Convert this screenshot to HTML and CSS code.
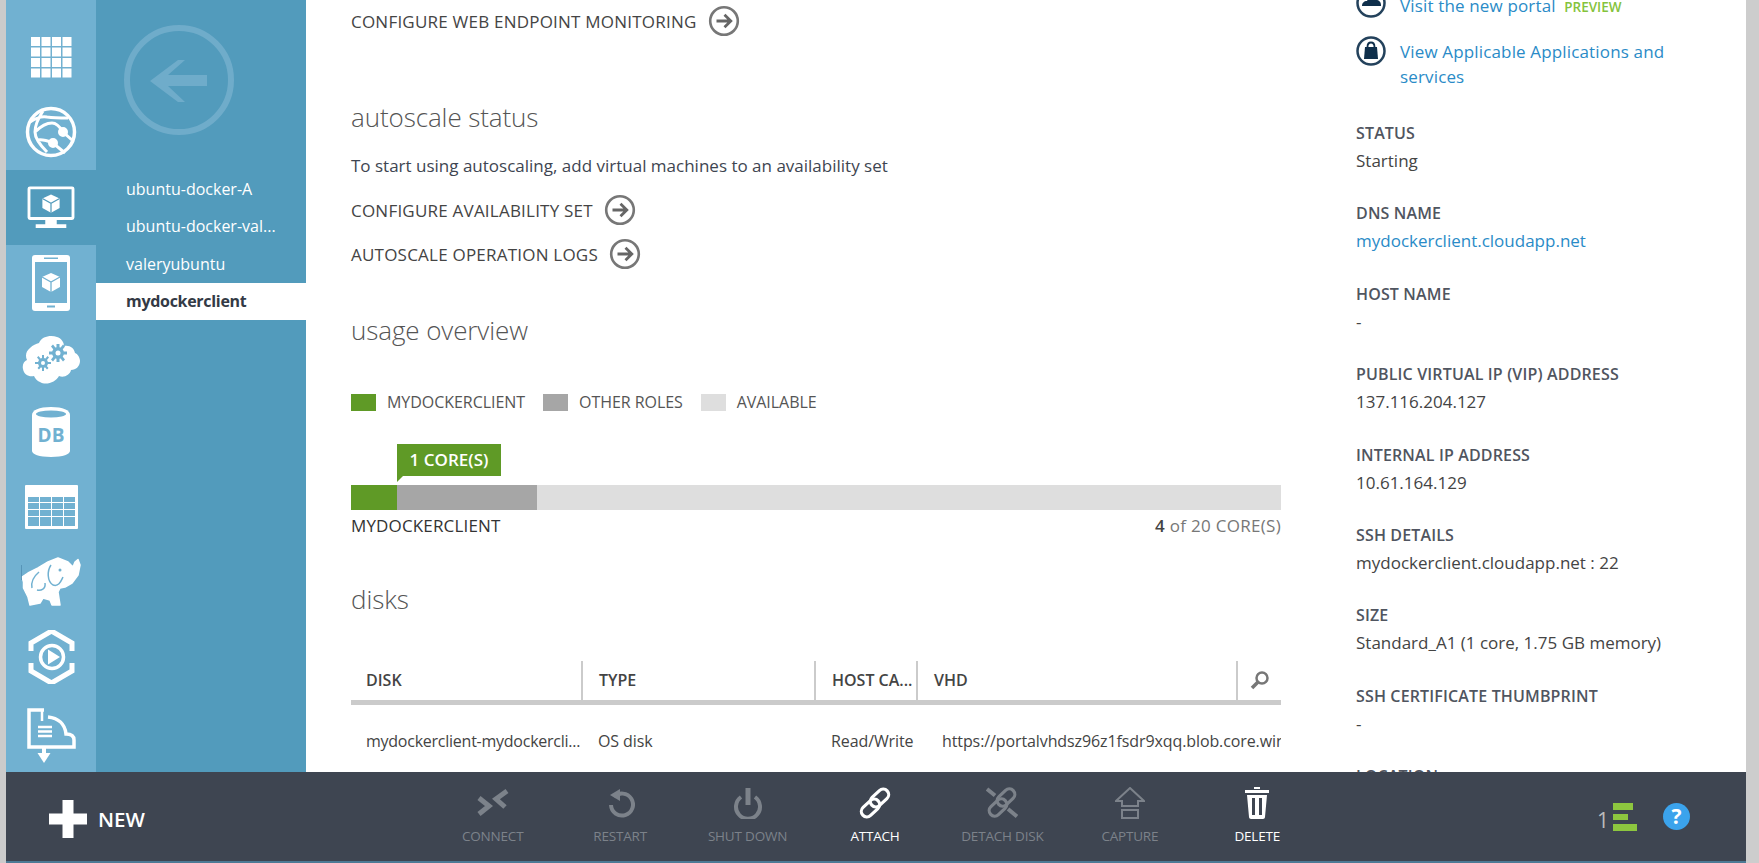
FILE: index.html
```html
<!DOCTYPE html>
<html lang="en">
<head>
  <meta charset="UTF-8">
  <title>Virtual machines - mydockerclient</title>
  <link rel="stylesheet" href="styles.css">
</head>
<body>
  <svg class="defs" width="0" height="0">
    <symbol id="go" viewBox="0 0 32 32">
      <circle cx="16" cy="16" r="13.8" fill="none" stroke="#777" stroke-width="2.6"/>
      <path d="M8.5 16H22M16.5 9.8 22.8 16l-6.3 6.2" fill="none" stroke="#666" stroke-width="2.8"/>
    </symbol>
  </svg>

  <div class="edge"></div>
  <div class="portal">
    <div class="workspace">
      <nav class="rail">
        <a class="rail-item r-all">
          <svg width="41" height="41" viewBox="0 0 41 41" fill="#fff"><path d="M0 0h9v9H0zM10.500 0h9v9h-9zM21 0h9v9h-9zM31.500 0h9v9h-9zM0 10.500h9v9H0zM10.500 10.500h9v9h-9zM21 10.500h9v9h-9zM31.500 10.500h9v9h-9zM0 21h9v9H0zM10.500 21h9v9h-9zM21 21h9v9h-9zM31.500 21h9v9h-9zM0 31.500h9v9H0zM10.500 31.500h9v9h-9zM21 31.500h9v9h-9zM31.500 31.500h9v9h-9z"/></svg>
        </a>
        <a class="rail-item r-web">
          <svg width="52" height="52" viewBox="0 0 52 52" fill="none" stroke="#fff" stroke-width="3"><circle cx="26" cy="26" r="23.500" stroke-width="3.500"/><path d="M5 16c6-4 12-6 17-5 7 1 14 1 21 1M18 5c-4 6-8 14-8 21 0 7 6 14 12 20M10 26c5-5 11-9 17-9 5 0 8 4 11 9l9 8M13 34c5-1 10 1 15 3l12 10"/><circle cx="38" cy="26" r="3.500" fill="#fff"/><circle cx="28" cy="37" r="3.500" fill="#fff"/></svg>
        </a>
        <a class="rail-item rail-active">
          <svg width="48" height="44" viewBox="0 0 50 46"><rect x="2" y="2" width="46" height="32" rx="1" fill="none" stroke="#fff" stroke-width="3"/><path d="M19 34h12v6H19zM9 40h32v4H9z" fill="#fff"/><path d="M25 9l9 4v10l-9 5-9-5V13z" fill="#fff"/><path d="M16 13l9 5 9-5M25 18v10" stroke="#529bbc" stroke-width="1.300" fill="none"/></svg>
        </a>
        <a class="rail-item r-mobile">
          <svg width="38" height="56" viewBox="0 0 38 56"><rect width="38" height="56" rx="3" fill="#fff"/><rect x="3" y="7" width="32" height="41" fill="#71b1d1"/><path d="M12 2.500h14v1.500H12zM15 50.500h8v2h-8z" fill="#71b1d1"/><path d="M19 18l9 4v10l-9 5-9-5V22z" fill="#fff"/><path d="M10 22l9 5 9-5M19 27v10" stroke="#71b1d1" stroke-width="1.300" fill="none"/></svg>
        </a>
        <a class="rail-item r-cloud">
          <svg width="58" height="50" viewBox="0 0 58 50"><path d="M17 8c3-7 12-8 18-6 4 1 7 5 7 9 6-1 10 2 11 7 3 1 5 5 5 8 0 5-4 9-9 9-1 5-7 8-12 6-3 6-13 10-19 6-3-1-5-4-6-6-5 1-10-1-11-7-1-4 1-8 4-9-2-4-1-9 3-12 3-3 6-4 9-5z" fill="#fff"/><g fill="#71b1d1"><circle cx="36" cy="18" r="6"/><path d="M34.500 9h3v18h-3zM27 16.500h18v3H27zM29 11.500l2-2 12 15-2 2zM41 9.500l2 2-12 15-2-2z"/><circle cx="21" cy="28" r="5"/><path d="M20 20h2v16h-2zM13 27h16v2H13zM15 22.500l1.500-1.500 10 12-1.500 1.500zM25.500 21l1.500 1.500-10 12-1.500-1.500z"/></g><circle cx="36" cy="18" r="2.500" fill="#fff"/><circle cx="21" cy="28" r="2" fill="#fff"/></svg>
        </a>
        <a class="rail-item r-db">
          <svg width="40" height="50" viewBox="0 0 40 50"><path d="M1 8C1 3 8 0 20 0s19 3 19 8v36c0 3-7 6-19 6S1 47 1 44z" fill="#fff"/><ellipse cx="20" cy="7" rx="15" ry="3.500" fill="#71b1d1"/><text class="db-text" x="20" y="35" text-anchor="middle">DB</text></svg>
        </a>
        <a class="rail-item r-table">
          <svg width="53" height="44" viewBox="0 0 53 44"><rect width="53" height="44" rx="1" fill="#fff"/><path d="M3 12h11v5H3zM15 12h11v5H15zM27 12h11v5H27zM39 12h11v5H39zM3 18h11v6H3zM15 18h11v6H15zM27 18h11v6H27zM39 18h11v6H39zM3 25h11v6H3zM15 25h11v6H15zM27 25h11v6H27zM39 25h11v6H39zM3 32h11v9H3zM15 32h11v9H15zM27 32h11v9H27zM39 32h11v9H39z" fill="#71b1d1"/></svg>
        </a>
        <a class="rail-item r-hadoop">
          <svg width="60" height="50" viewBox="0 0 60 50"><path d="M1 20 7 16 17 11 27 5 37 1 47 5 52 10 54 5 57 2.500 59 8 57 18 51 26 44 30 39 31 37 35 39 48H31L29 43 22 41 19 46 9 48 7 40 2.500 31 2.500 25z" fill="#fff" stroke="#fff" stroke-width="1.500" stroke-linejoin="round"/><path d="M18 15C12 20 10 26 11 31M24 26C25 32 20 34 16 33M30 8C26 14 26 24 32 28 38 30 40 24 42 20" fill="none" stroke="#71b1d1" stroke-width="1.500"/><circle cx="39" cy="13" r="1.500" fill="#71b1d1"/><path d="M.5 8v15" stroke="#4f8db0" stroke-width=".8"/></svg>
        </a>
        <a class="rail-item r-media">
          <svg width="47" height="54" viewBox="0 0 47 54"><path d="M3 21v-8L23.500 1 44 13v8M3 33v8l20.500 12L44 41v-8" fill="none" stroke="#fff" stroke-width="5"/><circle cx="24" cy="27" r="11.500" fill="none" stroke="#fff" stroke-width="3.500"/><path d="M20 19.500 32 27l-12 7.500z" fill="#fff"/></svg>
        </a>
        <a class="rail-item r-import">
          <svg width="49" height="55" viewBox="0 0 49 55" fill="none" stroke="#fff"><path d="M17 2H2v37h45v-7c0-4-3-6-8-6-1-10-8-16-18-17" stroke-width="3.500"/><path d="M15 2v11M11 19h14M11 23.500h14M11 28h14" stroke-width="2.500"/><path d="M17 39v8" stroke-width="4"/><path d="M10.500 45h13L17 55z" fill="#fff" stroke="none"/></svg>
        </a>
      </nav>

      <aside class="panel">
        <svg class="back" width="110" height="110" viewBox="0 0 110 110"><circle cx="55" cy="55" r="52" fill="none" stroke="#6facca" stroke-width="6"/><path d="M26 56 54 35H61L44 50H83V61H44L61 77H54z" fill="#6facca"/></svg>
        <ul class="vm-list">
          <li>ubuntu-docker-A</li>
          <li>ubuntu-docker-val...</li>
          <li>valeryubuntu</li>
          <li class="vm-current">mydockerclient</li>
        </ul>
      </aside>

      <main class="content">
        <div class="dashboard">
          <a class="go-link">CONFIGURE WEB ENDPOINT MONITORING <svg width="32" height="32"><use href="#go"/></svg></a>

          <h2 class="h-first">autoscale status</h2>
          <p class="note">To start using autoscaling, add virtual machines to an availability set</p>
          <a class="go-link go-second">CONFIGURE AVAILABILITY SET <svg width="32" height="32"><use href="#go"/></svg></a>
          <a class="go-link go-third">AUTOSCALE OPERATION LOGS <svg width="32" height="32"><use href="#go"/></svg></a>

          <h2 class="h-usage">usage overview</h2>
          <div class="legend">
            <span class="key"><i class="swatch sw-mine"></i>MYDOCKERCLIENT</span>
            <span class="key"><i class="swatch sw-other"></i>OTHER ROLES</span>
            <span class="key"><i class="swatch sw-free"></i>AVAILABLE</span>
          </div>
          <div class="usage-tip"><span class="tip">1 CORE(S)</span></div>
          <div class="usage-bar">
            <div class="seg-mine"></div>
            <div class="seg-other"></div>
          </div>
          <div class="usage-labels">
            <span>MYDOCKERCLIENT</span>
            <span class="usage-count"><b>4</b> of 20 CORE(S)</span>
          </div>

          <h2>disks</h2>
          <table class="disks">
            <thead>
              <tr>
                <th class="c-disk">DISK</th>
                <th class="c-type">TYPE</th>
                <th class="c-host">HOST CA...</th>
                <th class="c-vhd">VHD</th>
                <th class="c-find">
                  <svg width="20" height="20" viewBox="0 0 20 20" fill="none" stroke="#777"><circle cx="12" cy="8" r="5.500" stroke-width="2.500"/><path d="M8 12l-6 6" stroke-width="3.500"/></svg>
                </th>
              </tr>
            </thead>
            <tbody>
              <tr>
                <td class="disk-name">mydockerclient-mydockercli...</td>
                <td>OS disk</td>
                <td>Read/Write</td>
                <td colspan="2" class="url"><div>https://portalvhdsz96z1fsdr9xqq.blob.core.wind</div></td>
              </tr>
            </tbody>
          </table>
        </div>

        <div class="details">
          <a class="side-link visit">
            <svg width="30" height="30" viewBox="0 0 30 30"><circle cx="15" cy="15" r="13.500" fill="none" stroke="#24425c" stroke-width="2.500"/><path d="M6 18c0-3 2-5 5-5 1-3 7-4 9-1 3 0 5 2 5 5v1H6z" fill="#0f2f4b"/></svg>
            <span>Visit the new portal <em>PREVIEW</em></span>
          </a>
          <a class="side-link apps">
            <svg width="30" height="30" viewBox="0 0 30 30"><circle cx="15" cy="15" r="13.500" fill="none" stroke="#24425c" stroke-width="2.500"/><path d="M9 11h12l1 12H8z" fill="#0f2f4b"/><path d="M11.500 11c0-6 7-6 7 0" fill="none" stroke="#0f2f4b" stroke-width="1.800"/></svg>
            <span>View Applicable Applications and services</span>
          </a>
          <dl class="props">
            <div><dt>STATUS</dt><dd>Starting</dd></div>
            <div><dt>DNS NAME</dt><dd class="dns">mydockerclient.cloudapp.net</dd></div>
            <div><dt>HOST NAME</dt><dd>-</dd></div>
            <div><dt>PUBLIC VIRTUAL IP (VIP) ADDRESS</dt><dd>137.116.204.127</dd></div>
            <div><dt>INTERNAL IP ADDRESS</dt><dd>10.61.164.129</dd></div>
            <div><dt>SSH DETAILS</dt><dd>mydockerclient.cloudapp.net : 22</dd></div>
            <div><dt>SIZE</dt><dd>Standard_A1 (1 core, 1.75 GB memory)</dd></div>
            <div><dt>SSH CERTIFICATE THUMBPRINT</dt><dd>-</dd></div>
            <div><dt>LOCATION</dt><dd>West Europe</dd></div>
          </dl>
        </div>
      </main>
    </div>

    <footer class="cmdbar">
      <a class="new-btn">
        <svg width="38" height="38" viewBox="0 0 38 38" fill="#fff"><path d="M13.500 0h11v13.500H38v11H24.500V38h-11V24.500H0v-11h13.500z"/></svg>
        NEW
      </a>
      <div class="actions">
        <a class="action off">
          <svg width="32" height="32" viewBox="0 -1 32 32" fill="none" stroke="currentColor" stroke-width="5"><path d="M2 10l10 8-10 8M30 3 19 11l9 8"/></svg>
          CONNECT
        </a>
        <a class="action off">
          <svg width="30" height="32" viewBox="0 0 30 32" fill="none" stroke="currentColor" stroke-width="4"><path d="M9 10a11 11 0 1 1-3 8"/><path d="M15 2v12L5 8z" fill="currentColor" stroke="none"/></svg>
          RESTART
        </a>
        <a class="action off">
          <svg width="30" height="32" viewBox="0 0 30 32" fill="none" stroke="currentColor"><path d="M8 10a12 12 0 1 0 14 0" stroke-width="4"/><path d="M15 1v17" stroke-width="5"/></svg>
          SHUT DOWN
        </a>
        <a class="action">
          <svg width="34" height="32" viewBox="0 0 34 32" fill="none" stroke="#fff" stroke-width="3.200"><rect x="11" y="5.500" width="21" height="11" rx="5.500" transform="rotate(-43 21.500 11)"/><rect x="2" y="15.500" width="21" height="11" rx="5.500" transform="rotate(-43 12.500 21)"/></svg>
          ATTACH
        </a>
        <a class="action off">
          <svg width="32" height="32" viewBox="0 0 32 32" fill="none" stroke="currentColor" stroke-width="3.200"><rect x="10" y="5" width="20" height="11" rx="5.500" transform="rotate(-43 20 10.500)"/><rect x="2" y="15" width="20" height="11" rx="5.500" transform="rotate(-43 12 20.500)"/><path d="M1 2l8 6.500M22 22l9 7.500" stroke-width="4"/></svg>
          DETACH DISK
        </a>
        <a class="action off">
          <svg width="30" height="32" viewBox="0 0 30 32" fill="none" stroke="currentColor" stroke-width="2"><path d="M15 1 29 14h-6v5H7v-5H1z"/><path d="M7 23h16v8H7z"/></svg>
          CAPTURE
        </a>
        <a class="action">
          <svg width="26" height="32" viewBox="0 0 26 32" fill="#fff"><path d="M10 0h6v2h-6zM1 3h24v3H1z"/><path d="M3 8h20l-2 22c0 1-1 2-2 2H7c-1 0-2-1-2-2zM8 11v17h3V11zM15 11v17h3V11z" fill-rule="evenodd"/></svg>
          DELETE
        </a>
      </div>
      <div class="status">
        <span class="count">1</span>
        <span class="bars"><i class="b1"></i><i class="b2"></i><i class="b3"></i></span>
        <span class="help">?</span>
      </div>
    </footer>
    <div class="bar-line"></div>
  </div>
  <div class="scroll"></div>
</body>
</html>
```

FILE: styles.css
```css
* {
  box-sizing: border-box;
}

html, body {
  height: 100%;
}

body {
  margin: 0;
  display: flex;
  overflow: hidden;
  font-family: 'Open Sans', 'Noto Sans', sans-serif;
  font-size: 17px;
  color: #3e4551;
  background: #fff;
}

.defs {
  position: absolute;
}

.edge {
  width: 6px;
  background: #cbcbcb;
}

.scroll {
  width: 13px;
  background: #cdcdcd;
}

.portal {
  flex: 1;
  min-width: 0;
  display: flex;
  flex-direction: column;
}

.workspace {
  height: 772px;
  display: flex;
  overflow: hidden;
}

/* left icon rail */
.rail {
  width: 90px;
  background: #71b1d1;
}

.rail-item {
  display: flex;
  align-items: center;
  justify-content: center;
}

.r-all { height: 94px; padding-top: 20px; }
.r-web { height: 76px; }
.r-mobile { height: 75px; }
.r-cloud { height: 80px; }
.r-db { height: 64px; }
.r-table { height: 86px; }
.r-hadoop { height: 64px; }
.r-media { height: 86px; }
.r-import { height: 70px; }

.rail-active {
  height: 75px;
  background: #529bbc;
}

.db-text {
  font-family: 'Open Sans', sans-serif;
  font-weight: 700;
  font-size: 19px;
  fill: #71b1d1;
}

/* second column */
.panel {
  width: 210px;
  background: #529bbc;
  padding-top: 25px;
}

.back {
  display: block;
  margin-left: 28px;
}

.vm-list {
  list-style: none;
  margin: 36px 0 0;
  padding: 0;
  color: #fff;
}

.vm-list li {
  height: 37.300px;
  line-height: 37px;
  padding-left: 30px;
  font-size: 16px;
}

.vm-list .vm-current {
  background: #fff;
  color: #333a45;
  font-weight: 700;
  letter-spacing: -0.3px;
}

/* main */
.content {
  flex: 1;
  display: flex;
  min-width: 0;
}

.dashboard {
  width: 930px;
  margin-left: 45px;
  padding-top: 5px;
  flex: none;
}

.go-link {
  height: 32px;
  display: flex;
  align-items: center;
  gap: 11px;
  letter-spacing: 0.22px;
  color: #444;
}

.go-second {
  margin-top: 16px;
}

.go-third {
  margin-top: 12px;
}

h2 {
  margin: 43px 0 0;
  height: 36px;
  line-height: 36px;
  font-size: 26px;
  font-weight: 300;
  letter-spacing: -0.1px;
  color: #555;
}

.h-first {
  margin-top: 62px;
}

.h-usage {
  margin-top: 42px;
}

.note {
  margin: 19px 0 0;
  line-height: 24px;
  color: #3e4551;
}

.legend {
  margin-top: 42px;
  height: 24px;
  display: flex;
  gap: 18px;
  font-size: 16px;
  letter-spacing: -0.05px;
  color: #555;
}

.key {
  display: flex;
  align-items: center;
  gap: 11px;
}

.swatch {
  width: 25px;
  height: 17px;
}

.sw-mine, .seg-mine, .tip {
  background: #5f9a26;
}

.sw-other, .seg-other {
  background: #a6a6a6;
}

.sw-free {
  background: #dedede;
}

.usage-tip {
  margin-top: 30px;
  height: 41px;
  padding-left: 46px;
}

.tip {
  position: relative;
  display: block;
  width: 104px;
  height: 32px;
  line-height: 32px;
  text-align: center;
  color: #fff;
  font-weight: 600;
  font-size: 17px;
}

.tip::after {
  content: "";
  position: absolute;
  left: 0;
  top: 32px;
  border-top: 6px solid #5f9a26;
  border-right: 6px solid transparent;
}

.usage-bar {
  height: 25px;
  display: flex;
  background: #dedede;
}

.seg-mine {
  width: 46px;
}

.seg-other {
  width: 140px;
}

.usage-labels {
  margin-top: 4px;
  line-height: 24px;
  display: flex;
  justify-content: space-between;
  letter-spacing: 0.15px;
  color: #333;
}

.usage-count {
  color: #777;
  letter-spacing: 0.3px;
}

.usage-count b {
  color: #444;
  font-weight: 600;
}

.disks {
  margin-top: 44px;
  width: 930px;
  table-layout: fixed;
  border-collapse: collapse;
  font-size: 16px;
}

.disks th {
  height: 41px;
  padding: 0 0 0 16px;
  text-align: left;
  font-weight: 600;
  white-space: nowrap;
  color: #444;
  border-bottom: 5px solid #cbcbcb;
  border-right: 2px solid #cbcbcb;
}

.c-disk { width: 231px; }
.c-type { width: 233px; }
.c-host { width: 102px; }
.c-vhd { width: 320px; }
.c-find { width: 44px; }

.disks .c-disk {
  padding-left: 15px;
}

.disks .c-find {
  border-right: none;
  padding-left: 12px;
}

.disks th.c-find svg {
  display: block;
}

.disks td {
  height: 76px;
  padding: 0 0 0 16px;
  white-space: nowrap;
  overflow: hidden;
  letter-spacing: -0.1px;
  color: #444;
}

.disks .disk-name {
  padding-left: 15px;
  letter-spacing: -0.25px;
}

.disks .url {
  padding-left: 25px;
}

.url div {
  overflow: hidden;
}

/* right column */
.details {
  margin-left: 75px;
  margin-top: -6.500px;
  width: 340px;
  flex: none;
}

.side-link {
  display: flex;
  gap: 14px;
  width: 320px;
  line-height: 24.500px;
  letter-spacing: 0.15px;
  color: #2a8bc7;
}

.side-link svg {
  flex: none;
}

.visit svg {
  margin-top: -6px;
  margin-bottom: -6px;
}

.apps {
  margin-top: 21px;
}

.apps svg {
  margin-top: -4px;
}

.side-link em {
  margin-left: 4px;
  font-style: normal;
  font-weight: 600;
  font-size: 13.500px;
  letter-spacing: 0;
  color: #84c33c;
}

.props {
  margin: 31px 0 0;
}

.props div {
  height: 80.400px;
}

.props dt {
  line-height: 26px;
  font-size: 16px;
  font-weight: 600;
  letter-spacing: 0.15px;
  color: #505560;
}

.props dd {
  margin: 2px 0 0;
  line-height: 26px;
  color: #444;
}

.props .dns {
  color: #2a8bc7;
}

/* bottom command bar */
.cmdbar {
  height: 89px;
  flex: none;
  display: flex;
  background: #3e4551;
  color: #fff;
}

.bar-line {
  height: 2px;
  background: #4c7a95;
}

.new-btn {
  width: 423px;
  padding-left: 43px;
  padding-top: 4px;
  display: flex;
  align-items: center;
  gap: 11px;
  font-size: 20.500px;
  font-weight: 600;
}

.actions {
  display: flex;
  width: 892px;
}

.action {
  width: 127.500px;
  padding-top: 15px;
  display: flex;
  flex-direction: column;
  align-items: center;
  gap: 8px;
  font-size: 13.500px;
  letter-spacing: -0.2px;
  line-height: 19px;
  white-space: nowrap;
}

.action svg {
  flex: none;
}

.off {
  color: #7c828a;
}

.status {
  flex: 1;
  display: flex;
  align-items: center;
  padding-left: 276px;
}

.count {
  font-size: 21px;
  color: #bbb;
  width: 16px;
  padding-top: 6px;
}

.bars {
  width: 24px;
  display: flex;
  flex-direction: column;
  gap: 4px;
  margin-top: 1px;
}

.bars i {
  height: 6.500px;
  background: #8dc63f;
}

.bars .b1 { width: 20px; }
.bars .b2 { width: 15px; }
.bars .b3 { width: 24px; }

.help {
  margin-left: 26px;
  width: 27px;
  height: 27px;
  border-radius: 50%;
  background: #3ba3ec;
  color: #fff;
  text-align: center;
  line-height: 27px;
  font-weight: 700;
  font-size: 21px;
}
```
